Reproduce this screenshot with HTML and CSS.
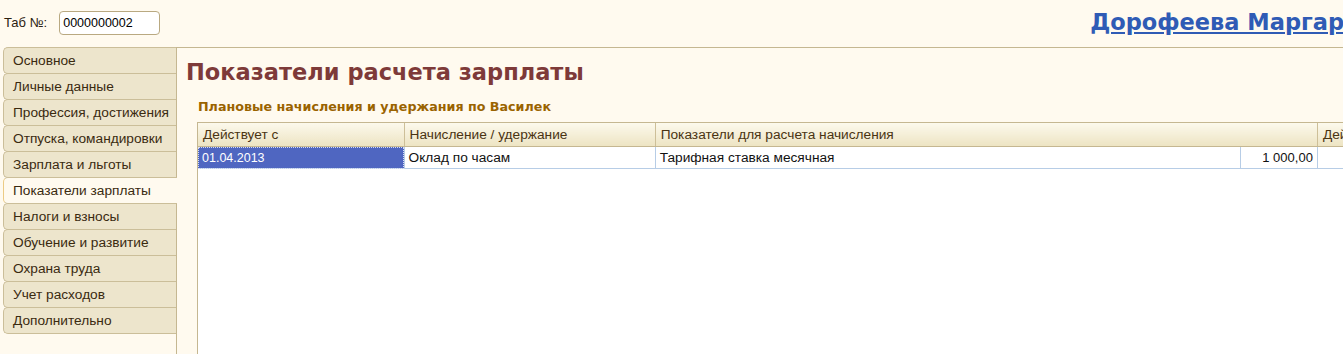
FILE: index.html
```html
<!DOCTYPE html>
<html lang="ru">
<head>
    <meta charset="UTF-8">
    <title>Показатели расчета зарплаты</title>
    <link rel="stylesheet" href="styles.css">
</head>
<body>
    <div class="header">
        <label class="tab-label" for="tabNo">Таб №:</label>
        <input class="tab-input" id="tabNo" type="text" value="0000000002">
        <a class="person" href="#">Дорофеева Маргарита Ивановна</a>
    </div>

    <div class="main">
        <div class="tabs">
            <div class="tab">Основное</div>
            <div class="tab">Личные данные</div>
            <div class="tab">Профессия, достижения</div>
            <div class="tab">Отпуска, командировки</div>
            <div class="tab">Зарплата и льготы</div>
            <div class="tab active">Показатели зарплаты</div>
            <div class="tab">Налоги и взносы</div>
            <div class="tab">Обучение и развитие</div>
            <div class="tab">Охрана труда</div>
            <div class="tab">Учет расходов</div>
            <div class="tab">Дополнительно</div>
        </div>

        <div class="content">
            <h1>Показатели расчета зарплаты</h1>
            <h2>Плановые начисления и удержания по Василек</h2>
            <div class="grid">
                <table>
                    <colgroup>
                        <col class="c1">
                        <col class="c2">
                        <col class="c3">
                        <col class="c4">
                        <col class="c5">
                    </colgroup>
                    <thead>
                        <tr>
                            <th>Действует с</th>
                            <th>Начисление / удержание</th>
                            <th colspan="2">Показатели для расчета начисления</th>
                            <th>Действие</th>
                        </tr>
                    </thead>
                    <tbody>
                        <tr>
                            <td class="selected">01.04.2013</td>
                            <td>Оклад по часам</td>
                            <td>Тарифная ставка месячная</td>
                            <td class="num">1 000,00</td>
                            <td></td>
                        </tr>
                    </tbody>
                </table>
            </div>
        </div>
    </div>
</body>
</html>
```

FILE: styles.css
```css
html, body {
    margin: 0;
    height: 100%;
}
body {
    font-family: "Liberation Sans", Arial, sans-serif;
    font-size: 13.7px;
    color: #2b2110;
    background-color: #fffaef;
    overflow: hidden;
    display: flex;
    flex-direction: column;
}
.header {
    height: 47px;
    display: flex;
    align-items: flex-start;
    white-space: nowrap;
}
.tab-label {
    margin: 15px 0 0 4px;
    font-size: 13px;
}
.tab-input {
    box-sizing: border-box;
    width: 101px;
    height: 24px;
    margin: 11px 0 0 12px;
    padding: 0 0 1px 3px;
    border: 1px solid #b9a981;
    border-radius: 4px;
    background: #fff;
    font-family: "Liberation Sans", Arial, sans-serif;
    font-size: 12.5px;
    color: #000;
}
.person {
    margin: 9px 0 0 930px;
    font-family: "DejaVu Sans", Verdana, sans-serif;
    font-weight: bold;
    font-size: 22.5px;
    color: #2f5bb5;
    text-decoration: underline;
}
.main {
    flex: 1;
    display: flex;
    min-height: 0;
}
.tabs {
    width: 173px;
    padding-left: 3px;
    border-right: 1px solid #c5b791;
    flex-shrink: 0;
}
.tab {
    height: 25px;
    line-height: 25px;
    padding-left: 9px;
    border: 1px solid #cbbe99;
    border-right: none;
    border-radius: 5px 0 0 5px;
    margin-bottom: -1px;
    background-color: #ede5cc;
    color: #3a2a10;
    white-space: nowrap;
}
.tab.active {
    background-color: #fffaef;
    border-left-color: #eccb84;
    position: relative;
    margin-right: -1px;
}
.content {
    flex: 1;
    min-width: 0;
    border-top: 1px solid #c5b791;
    padding-left: 9px;
    display: flex;
    flex-direction: column;
}
h1 {
    margin: 11px 0 0 0;
    font-family: "DejaVu Sans", Verdana, sans-serif;
    font-size: 22.5px;
    line-height: 26px;
    font-weight: bold;
    color: #7e3a39;
    white-space: nowrap;
}
h2 {
    margin: 14px 0 0 12px;
    font-family: "DejaVu Sans", Verdana, sans-serif;
    font-size: 12.7px;
    line-height: 15px;
    font-weight: bold;
    color: #9a6300;
    white-space: nowrap;
}
.grid {
    flex: 1;
    margin: 8px 0 0 11px;
    background: #fff;
    border-left: 1px solid #c5b791;
    border-top: 1px solid #c5b791;
    overflow: hidden;
}
table {
    border-collapse: collapse;
    table-layout: fixed;
    width: 1320px;
}
col.c1 { width: 206px; }
col.c2 { width: 251px; }
col.c3 { width: 585px; }
col.c4 { width: 77px; }
col.c5 { width: 200px; }
th {
    height: 23px;
    padding: 0 0 0 5px;
    text-align: left;
    font-weight: normal;
    color: #4a3413;
    background: linear-gradient(#fcf9ec, #ede4c3);
    border-right: 1px solid #cdbf98;
    border-bottom: 1px solid #c5b791;
    white-space: nowrap;
    overflow: hidden;
}
td {
    height: 21px;
    padding: 0 0 0 4px;
    border-right: 1px solid #b7cde6;
    border-bottom: 1px solid #b7cde6;
    white-space: nowrap;
    overflow: hidden;
    color: #111;
}
td.num {
    text-align: right;
    padding: 0 4px 0 0;
    font-size: 13px;
}
td.selected {
    font-size: 12.5px;
    background-color: #4f66c1;
    color: #fff;
    outline: 1px dotted #d8def4;
    outline-offset: -1px;
}
```
